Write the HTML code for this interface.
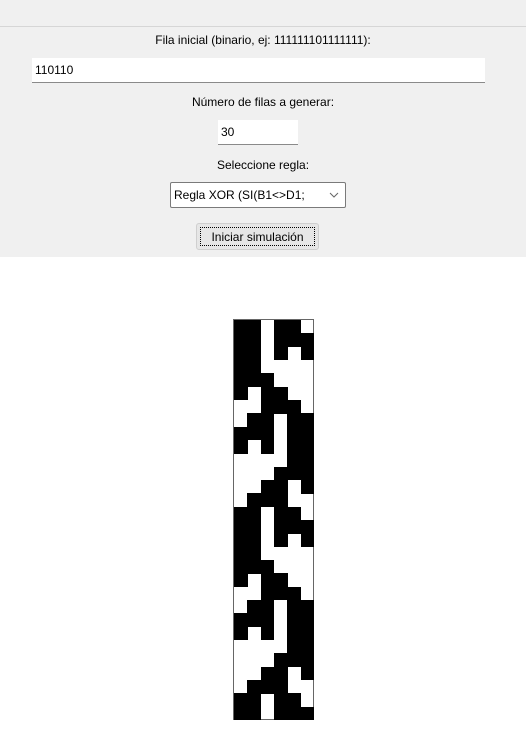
<!DOCTYPE html>
<html><head><meta charset="utf-8"><style>
*{box-sizing:border-box;margin:0;padding:0}
body{width:526px;height:752px;background:#fff;font-family:"Liberation Sans",sans-serif;font-size:12px;color:#000;position:relative;overflow:hidden}
.top{position:absolute;left:0;top:0;width:526px;height:27px;background:#f0f0f0;border-bottom:1px solid #d6d6d6}
.panel{position:absolute;left:0;top:27px;width:526px;height:230px;background:#f0f0f0}
.lbl{position:absolute;left:0;width:526px;text-align:center;font-size:12px}
.inp{position:absolute;background:#fff;border-bottom:1px solid #8a8a8a;padding-left:3px;font-size:12px;line-height:24px}
.sel{position:absolute;left:170px;top:182px;width:176px;height:26px;background:#fff;border:1px solid #7a7a7a;border-radius:2px;font-size:12px;line-height:24px;padding-left:3px}
.btn{position:absolute;left:196px;top:223px;width:123px;height:27px;background:#e6e6e6;border:1px solid #cfcfcf;border-radius:3px}
.btn span{position:absolute;left:3px;top:3px;right:3px;bottom:3px;border:1px dotted #000;text-align:center;line-height:19px;font-size:12px}
#g{position:absolute;left:233px;top:319px;width:81px;height:401px;border:1px solid #666;background:#fff}
#g div{position:absolute;background:#000}
</style></head><body>
<div class="top"></div>
<div class="panel"></div>
<div class="lbl" style="top:33px">Fila inicial (binario, ej: 111111101111111):</div>
<div class="inp" style="left:32px;top:58px;width:453px;height:25px">110110</div>
<div class="lbl" style="top:95px">Número de filas a generar:</div>
<div class="inp" style="left:218px;top:120px;width:80px;height:25px">30</div>
<div class="lbl" style="top:158px">Seleccione regla:</div>
<div class="sel">Regla XOR (SI(B1&lt;&gt;D1;<svg style="position:absolute;right:6px;top:9px" width="10" height="6"><path d="M1 1 L5 5 L9 1" fill="none" stroke="#666" stroke-width="1"/></svg></div>
<div class="btn"><span>Iniciar simulación</span></div>
<div id="g"></div>
<script>
var r=[1,1,0,1,1,0],g=document.getElementById('g'),s=80/6,h='';
for(var y=0;y<30;y++){for(var x=0;x<6;x++)if(r[x])h+='<div style="left:'+(x*s)+'px;top:'+(y*s)+'px;width:'+(s+0.5)+'px;height:'+(s+0.5)+'px"></div>';
var n=[];for(var i=0;i<6;i++)n.push((i>0?r[i-1]:0)^(i<5?r[i+1]:0));r=n;}
g.innerHTML=h;
</script>
</body></html>
